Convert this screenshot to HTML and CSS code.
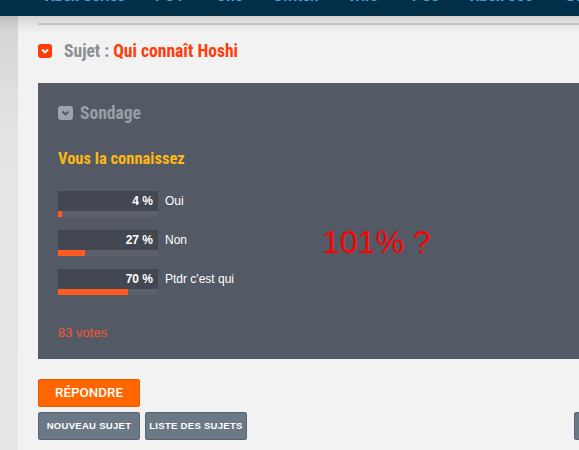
FILE: index.html
```html
<!DOCTYPE html>
<html lang="fr">
<head>
<meta charset="utf-8">
<title>Qui connaît Hoshi</title>
<link rel="stylesheet" href="styles.css">
</head>
<body>
<nav class="topnav">
  <ul class="topnav-list">
    <li class="n1">Xbox Series</li>
    <li class="n2">PS4</li>
    <li class="n3">One</li>
    <li class="n4">Switch</li>
    <li class="n5">WiiU</li>
    <li class="n6">PS3</li>
    <li class="n7">Xbox 360</li>
    <li class="n8">Goodies</li>
  </ul>
</nav>
<div class="page">
  <div class="gutter"></div>
  <main class="content">
    <div class="rule"></div>
    <h1 class="subject">
      <span class="chev chev-orange"><svg viewBox="0 0 14 14" width="14" height="14"><path d="M4 5.6 7 8.4 10 5.6" fill="none" stroke="#fff" stroke-width="2"/></svg></span>
      <span class="subject-label">Sujet :</span>
      <span class="subject-title">Qui connaît Hoshi</span>
    </h1>
    <section class="poll">
      <h2 class="poll-head">
        <span class="chev chev-grey"><svg viewBox="0 0 15 14" width="15" height="14"><path d="M4.5 5.6 7.5 8.4 10.5 5.6" fill="none" stroke="#535a65" stroke-width="2"/></svg></span>
        <span>Sondage</span>
      </h2>
      <h3 class="poll-question">Vous la connaissez</h3>
      <div class="poll-body">
        <div class="options">
          <div class="option">
            <div class="meter"><div class="pct">4 %</div><div class="track"><div class="fill" style="width:4%"></div></div></div>
            <span class="label">Oui</span>
          </div>
          <div class="option">
            <div class="meter"><div class="pct">27 %</div><div class="track"><div class="fill" style="width:27%"></div></div></div>
            <span class="label">Non</span>
          </div>
          <div class="option">
            <div class="meter"><div class="pct">70 %</div><div class="track"><div class="fill" style="width:70%"></div></div></div>
            <span class="label">Ptdr c'est qui</span>
          </div>
        </div>
        <div class="remark">101% ?</div>
      </div>
      <div class="votes">83 votes</div>
    </section>
    <a class="btn-reply">RÉPONDRE</a>
    <div class="btn-row">
      <div class="btn-group">
        <a class="btn-grey">NOUVEAU SUJET</a>
        <a class="btn-grey">LISTE DES SUJETS</a>
      </div>
      <a class="btn-grey">RETOUR</a>
    </div>
  </main>
</div>
</body>
</html>
```
FILE: styles.css
```css
* { box-sizing: border-box; }
html, body { margin: 0; padding: 0; height: 450px; overflow: hidden; }
body { background: #f2f2f2; font-family: "Liberation Sans", Arial, sans-serif; position: relative; }

.topnav { height: 16px; background: #002f47; overflow: hidden; }
.topnav-list {
  list-style: none; margin: -14px 0 0; padding: 0; display: flex; height: 19px;
  font: 700 15px/21px Roboto, sans-serif; color: #4aa3dc; white-space: nowrap;
}
.topnav-list li { flex: none; }
.n1 { margin-left: 45px; width: 110px; }
.n2 { width: 61px; }
.n3 { width: 57px; }
.n4 { width: 75px; }
.n5 { width: 64px; }
.n6 { width: 58px; }
.n7 { width: 95px; }
.n8 { width: 60px; }

.page { display: flex; height: 434px; }
.gutter {
  width: 18px; flex: none;
  background: linear-gradient(#bcbcbc 0, #d6d6d6 14px, #e4e4e4 120px, #e6e6e6 100%);
}
.content {
  width: 658px; flex: none; padding: 7px 0 0 20px;
  background: linear-gradient(#d2d2d2 0, #e2e2e2 7px, #eeeeee 14px, #f2f2f2 20px);
}
.rule { height: 2px; background: #c4c4c4; }

.subject {
  display: flex; align-items: center; margin: 19px 0 0; height: 14px;
  font: 700 17.6px/22px "Roboto Condensed", "Liberation Sans Narrow", Roboto, sans-serif;
  font-stretch: 75%;
}
.chev { display: flex; flex: none; border-radius: 3px; }
.chev-orange { background: #ff3c0a; width: 14px; height: 14px; margin-right: 12px; }
.chev-grey { background: #a0a3ab; width: 15px; height: 14px; margin-right: 7px; }
.subject-label { color: #8a8d92; margin-right: 4px; }
.subject-title { color: #ff3c0a; }

.poll { background: #535a65; margin-top: 25px; height: 276px; padding: 23px 0 0 20px; }
.poll-head {
  display: flex; align-items: center; margin: 0; height: 14px; color: #9a9ea7;
  font: 700 17.5px/22px "Roboto Condensed", "Liberation Sans Narrow", Roboto, sans-serif;
  font-stretch: 75%;
}
.poll-question {
  margin: 30px 0 0; height: 18px; color: #fdb813;
  font: 700 16.5px/18px "Roboto Condensed", "Liberation Sans Narrow", Roboto, sans-serif;
  font-stretch: 75%;
}
.poll-body { display: flex; align-items: center; margin-top: 23px; }
.options { width: 264px; display: flex; flex-direction: column; gap: 13px; }
.option { display: flex; align-items: flex-start; }
.meter { width: 100px; flex: none; margin-right: 7px; }
.pct {
  height: 20px; background: #434751; color: #fff; text-align: right; padding-right: 5px;
  font: 700 12px/20px "Liberation Sans", Arial, sans-serif;
}
.track { height: 6px; background: #5b606b; }
.fill { height: 6px; background: #ff5a1f; }
.label { color: #fff; font-size: 12px; line-height: 20px; }
.remark { color: #ff0000; font-size: 32px; line-height: 37px; margin-bottom: 2px; }
.votes { margin-top: 30px; color: #fa553a; font-size: 13px; line-height: 15px; }

.btn-reply {
  display: block; width: 102px; height: 28px; margin-top: 20px;
  background: #ff6600; border: 1px solid #e65c00; border-radius: 2px; color: #fff;
  font: 500 13.4px/26px Roboto, sans-serif; text-align: center;
}
.btn-row { display: flex; justify-content: space-between; margin-top: 5px; }
.btn-group { display: flex; gap: 5px; }
.btn-grey {
  display: block; height: 28px; padding: 0 3px; min-width: 102px; background: #6b7885;
  border: 1px solid #5a6672; border-radius: 2px; color: #fff; text-align: center;
  font: 700 9.5px/26px "Liberation Sans", Arial, sans-serif; letter-spacing: .3px; white-space: nowrap;
}
```
